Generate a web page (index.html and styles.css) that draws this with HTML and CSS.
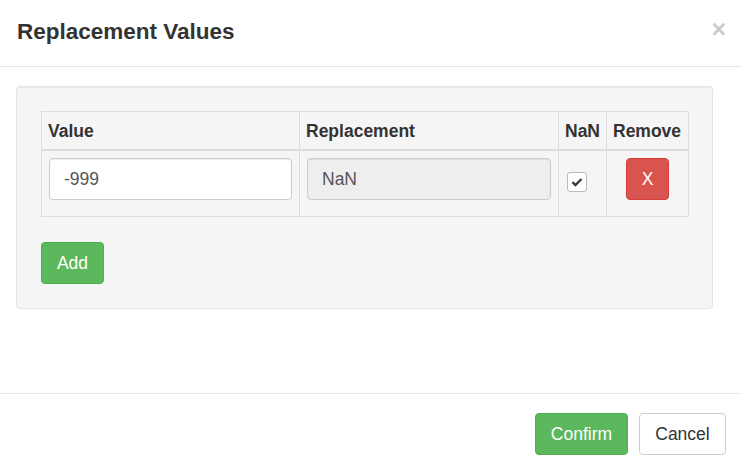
FILE: index.html
```html
<!DOCTYPE html>
<html lang="en">
<head>
<meta charset="utf-8">
<title>Replacement Values</title>
<link rel="stylesheet" href="styles.css">
</head>
<body>
	<div class="modal">
		<div class="modal-header">
			<h4 class="modal-title">Replacement Values</h4>
			<button type="button" class="close">&times;</button>
		</div>

		<div class="modal-body">
			<div class="well">
				<table class="replace-table">
					<colgroup>
						<col class="col-value">
						<col class="col-replacement">
						<col class="col-nan">
						<col class="col-remove">
					</colgroup>
					<thead>
						<tr>
							<th>Value</th>
							<th>Replacement</th>
							<th>NaN</th>
							<th>Remove</th>
						</tr>
					</thead>
					<tbody>
						<tr>
							<td><input type="text" class="form-control" value="-999"></td>
							<td><input type="text" class="form-control" value="NaN" disabled></td>
							<td>
								<span class="check">
									<svg width="12" height="10" viewBox="0 0 12 10"><path d="M1.5 5.2 L4.4 8 L10.5 2" fill="none" stroke="#3a3a3a" stroke-width="2.4"/></svg>
								</span>
							</td>
							<td class="center"><button type="button" class="btn btn-danger btn-x">X</button></td>
						</tr>
					</tbody>
				</table>
				<button type="button" class="btn btn-success btn-add">Add</button>
			</div>
		</div>

		<div class="modal-footer">
			<button type="button" class="btn btn-success btn-confirm">Confirm</button>
			<button type="button" class="btn btn-default btn-cancel">Cancel</button>
		</div>
	</div>
</body>
</html>
```

FILE: styles.css
```css
* {
	box-sizing: border-box;
}
html, body {
	margin: 0;
	padding: 0;
	height: 100%;
	background: #fff;
}
body {
	font-family: "Liberation Sans", Arial, sans-serif;
	font-size: 17.5px;
	color: #333;
}
.modal {
	height: 473px;
	display: flex;
	flex-direction: column;
}
.modal-header {
	height: 67px;
	padding: 0 15px 0 17px;
	border-bottom: 1px solid #e5e5e5;
	display: flex;
	align-items: center;
	justify-content: space-between;
}
.modal-title {
	margin: 0;
	font-size: 22.5px;
	font-weight: bold;
	line-height: 30px;
	padding-bottom: 3px;
}
.close {
	border: 0;
	background: none;
	padding: 0;
	margin-top: -7px;
	font-family: "Liberation Sans", Arial, sans-serif;
	font-size: 25px;
	font-weight: bold;
	line-height: 1;
	color: #000;
	opacity: .2;
	cursor: pointer;
}
.modal-body {
	flex: 1;
	padding: 19px 28px 0 16px;
}
.well {
	background: #f5f5f5;
	border: 1px solid #e3e3e3;
	border-radius: 4px;
	padding: 24px;
	box-shadow: inset 0 1px 1px rgba(0,0,0,.05);
}
.replace-table {
	width: 100%;
	table-layout: fixed;
	border-collapse: collapse;
	border: 1px solid #ddd;
	margin-bottom: 25px;
}
.col-value { width: 258px; }
.col-replacement { width: 259px; }
.col-nan { width: 48px; }
.col-remove { width: 82px; }
.replace-table th {
	text-align: left;
	font-weight: bold;
	padding: 8px 5px 6px 6px;
	line-height: 23px;
	border: 1px solid #ddd;
	border-bottom: 2px solid #ddd;
	white-space: nowrap;
}
.replace-table td {
	padding: 7px 7px 16px 7px;
	border: 1px solid #ddd;
	vertical-align: top;
}
.replace-table td.center {
	text-align: center;
}
.form-control {
	display: block;
	width: 100%;
	height: 42px;
	padding: 0 14px;
	font-family: "Liberation Sans", Arial, sans-serif;
	font-size: 17.5px;
	color: #555;
	background: #fff;
	border: 1px solid #ccc;
	border-radius: 4px;
	box-shadow: inset 0 1px 1px rgba(0,0,0,.075);
}
.form-control[disabled] {
	background: #eee;
}
.check {
	display: flex;
	align-items: center;
	justify-content: center;
	width: 20px;
	height: 20px;
	margin: 14px 0 0 1px;
	background: #fff;
	border: 1px solid #bbb;
	border-radius: 3px;
}
.btn {
	display: inline-block;
	height: 42px;
	padding: 0 16px;
	font-family: "Liberation Sans", Arial, sans-serif;
	font-size: 17.5px;
	line-height: 40px;
	border: 1px solid transparent;
	border-radius: 4px;
	cursor: pointer;
	vertical-align: middle;
}
.btn-success {
	color: #fff;
	background: #5cb85c;
	border-color: #4cae4c;
}
.btn-danger {
	color: #fff;
	background: #d9534f;
	border-color: #d43f3a;
}
.btn-default {
	color: #333;
	background: #fff;
	border-color: #ccc;
}
.btn-x {
	width: 43px;
	padding: 0;
}
.btn-add {
	width: 63px;
	padding: 0;
}
.modal-footer {
	height: 80px;
	padding: 19px 15px 0;
	border-top: 1px solid #e5e5e5;
	display: flex;
	justify-content: flex-end;
	gap: 11px;
}
.btn-confirm {
	width: 93px;
	padding: 0;
}
.btn-cancel {
	width: 87px;
	padding: 0;
}
```
